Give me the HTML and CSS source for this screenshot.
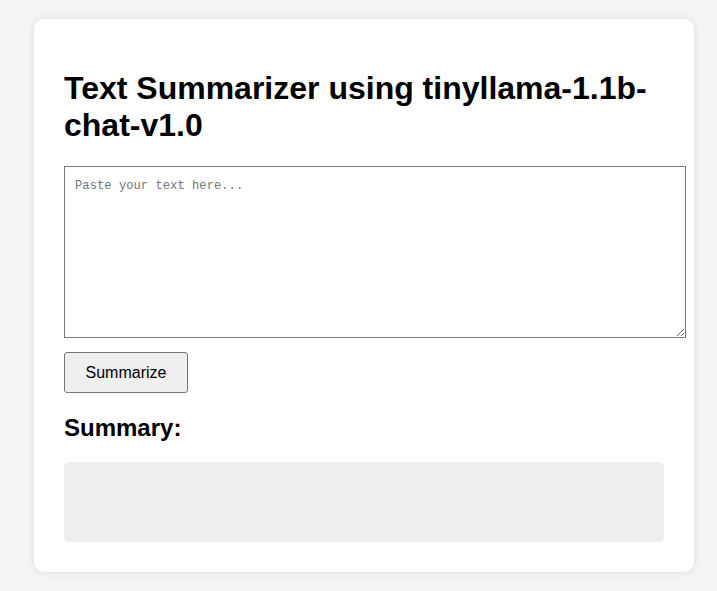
FILE: index.html
```html
<!DOCTYPE html>
<html lang="en">
<head>
<meta charset="utf-8">
<title>Text Summarizer</title>
<link rel="stylesheet" href="styles.css">
</head>
<body>
  <div class="card">
    <h1 class="title">Text Summarizer using tinyllama-1.1b-chat-v1.0</h1>
    <textarea class="input" placeholder="Paste your text here..."></textarea>
    <button class="btn" type="button">Summarize</button>
    <h2 class="subtitle">Summary:</h2>
    <div class="summary"></div>
  </div>
</body>
</html>
```
FILE: styles.css
```css
html, body {
  margin: 0;
  padding: 0;
}
body {
  background: #f5f5f5;
  font-family: "Liberation Sans", Arial, sans-serif;
  color: #000;
  min-height: 591px;
}
.card {
  box-sizing: content-box;
  width: 600px;
  margin: 19px 0 0 34px;
  padding: 30px;
  background: #fff;
  border-radius: 10px;
  box-shadow: 0 0 10px rgba(0, 0, 0, 0.1);
}
.title {
  font-size: 32px;
  font-weight: bold;
  margin: 21px 0 22px;
  line-height: 37px;
}
.input {
  display: block;
  box-sizing: content-box;
  width: 600px;
  height: 149px;
  padding: 11px 10px 10px;
  margin: 0 0 14px;
  border: 1px solid #767676;
  border-radius: 0;
  font-family: "Liberation Mono", "DejaVu Sans Mono", monospace;
  font-size: 12.2px;
  line-height: 17px;
  resize: vertical;
  background: #fff;
}
.input::placeholder {
  color: #757575;
}
.btn {
  display: block;
  box-sizing: border-box;
  width: 124px;
  height: 41px;
  padding: 0;
  margin: 0;
  font-family: "Liberation Sans", Arial, sans-serif;
  font-size: 16px;
  color: #000;
  background: #efefef;
  border: 1px solid #767676;
  border-radius: 3px;
}
.subtitle {
  font-size: 24px;
  font-weight: bold;
  line-height: 28px;
  margin: 21px 0 20px;
}
.summary {
  height: 80px;
  background: #eee;
  border-radius: 5px;
}
```
